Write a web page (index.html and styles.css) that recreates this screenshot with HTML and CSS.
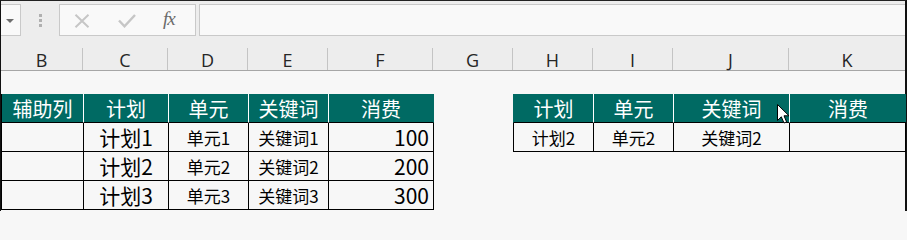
FILE: index.html
```html
<!DOCTYPE html>
<html lang="zh-CN">
<head>
<meta charset="utf-8">
<title>Sheet</title>
<link rel="stylesheet" href="styles.css">
</head>
<body>
<div class="frame">
  <div class="toolbar">
    <div class="namebox"><span class="tri"></span></div>
    <div class="grip"><i></i><i></i><i></i></div>
    <div class="fxbox">
      <svg class="ico-x" width="16" height="14" viewBox="0 0 16 14"><path d="M1.5 0.8 L14.5 13.2 M14.5 0.8 L1.5 13.2" stroke="#c6c6c6" stroke-width="2" fill="none"/></svg>
      <svg class="ico-ok" width="18" height="14" viewBox="0 0 18 14"><path d="M1 6.5 L6.5 12.3 L17 1" stroke="#c6c6c6" stroke-width="2.4" fill="none"/></svg>
      <span class="fx">fx</span>
    </div>
    <div class="formula"></div>
  </div>
  <div class="colheads">
    <div class="ch w82">B</div>
    <div class="ch w85">C</div>
    <div class="ch w80">D</div>
    <div class="ch w80">E</div>
    <div class="ch w105">F</div>
    <div class="ch w80">G</div>
    <div class="ch w80">H</div>
    <div class="ch w80">I</div>
    <div class="ch w116">J</div>
    <div class="ch w116 last">K</div>
  </div>
  <div class="sheet">
    <div class="tbl tbl-left">
      <div class="th">辅助列</div>
      <div class="th">计划</div>
      <div class="th">单元</div>
      <div class="th">关键词</div>
      <div class="th end">消费</div>

      <div class="td"></div>
      <div class="td big">计划1</div>
      <div class="td">单元1</div>
      <div class="td">关键词1</div>
      <div class="td num">100</div>

      <div class="td"></div>
      <div class="td big">计划2</div>
      <div class="td">单元2</div>
      <div class="td">关键词2</div>
      <div class="td num">200</div>

      <div class="td"></div>
      <div class="td big">计划3</div>
      <div class="td">单元3</div>
      <div class="td">关键词3</div>
      <div class="td num">300</div>
    </div>
    <div class="tbl tbl-right">
      <div class="th first">计划</div>
      <div class="th">单元</div>
      <div class="th">关键词</div>
      <div class="th end">消费</div>

      <div class="td first">计划2</div>
      <div class="td">单元2</div>
      <div class="td">关键词2</div>
      <div class="td"></div>
    </div>
  </div>
  <svg class="cursor" width="13" height="20" viewBox="0 0 13 20"><path d="M0.5 0.5 L0.5 16.5 L4.3 12.8 L7 19 L9.6 17.9 L7 11.8 L12 11.8 Z" fill="#fff" stroke="#000" stroke-width="1" stroke-linejoin="miter"/></svg>
</div>
</body>
</html>
```
FILE: styles.css
```css
html, body {
  margin: 0;
  padding: 0;
}
html {
  height: 211px;
  overflow: hidden;
  background: #f7f7f7;
}
body {
  width: 907px;
  height: 211px;
  overflow: hidden;
  background: #f7f7f7;
}
.frame {
  position: relative;
  box-sizing: border-box;
  width: 907px;
  height: 211px;
  border-top: 1px solid #222;
  border-left: 1px solid #111;
  border-right: 2px solid #111;
  background: #f7f7f7;
}
.toolbar {
  display: flex;
  align-items: flex-start;
  height: 47px;
  box-sizing: border-box;
  padding-top: 3px;
  background: #ededed;
}
.namebox {
  box-sizing: border-box;
  width: 20px;
  height: 32px;
  border: 1px solid #c9c9c9;
  border-left: none;
  background: #f9f9f9;
  display: flex;
  align-items: center;
  justify-content: center;
}
.tri {
  width: 0;
  height: 0;
  border-left: 4px solid transparent;
  border-right: 4px solid transparent;
  border-top: 4px solid #6d6d6d;
  margin-top: 2px;
  margin-left: -2px;
}
.grip {
  margin-left: 18px;
  margin-top: 10px;
  display: flex;
  flex-direction: column;
  gap: 2px;
}
.grip i {
  display: block;
  width: 3px;
  height: 3px;
  background: #b0b0b0;
}
.fxbox {
  box-sizing: border-box;
  margin-left: 17px;
  width: 137px;
  height: 32px;
  border: 1px solid #c9c9c9;
  background: #f9f9f9;
  display: flex;
  align-items: center;
}
.ico-x {
  margin-left: 14px;
  margin-top: 1px;
}
.ico-ok {
  margin-left: 28px;
  margin-top: 1px;
}
.fx {
  margin-left: 27px;
  font-family: "Liberation Serif", serif;
  font-style: italic;
  font-size: 19px;
  color: #6a6a6a;
  letter-spacing: -1px;
  margin-top: -2px;
}
.formula {
  box-sizing: border-box;
  margin-left: 3px;
  flex: 1;
  height: 32px;
  border: 1px solid #c9c9c9;
  border-right: none;
  background: #f9f9f9;
}
.colheads {
  display: flex;
  height: 23px;
  box-sizing: border-box;
  border-bottom: 1px solid #a6a6a6;
  background: #ededed;
}
.ch {
  box-sizing: border-box;
  height: 22px;
  border-right: 1px solid #c4c4c4;
  display: flex;
  align-items: center;
  justify-content: center;
  font-family: "Open Sans", sans-serif;
  font-size: 18px;
  color: #262626;
  padding-top: 1px;
}
.ch.last {
  border-right: none;
}
.w80 { width: 80px; }
.w82 { width: 82px; }
.w85 { width: 85px; }
.w105 { width: 105px; }
.w116 { width: 116px; }

.sheet {
  display: flex;
  align-items: flex-start;
  padding-top: 23px;
}
.tbl {
  display: grid;
  grid-auto-rows: 29px;
  font-family: "Noto Sans CJK SC", sans-serif;
}
.tbl-left {
  grid-template-columns: 82px 85px 80px 80px 105px;
  border-left: 1px solid #000;
}
.tbl-right {
  margin-left: 79px;
  grid-template-columns: 81px 80px 116px 116px;
}
.th, .td {
  box-sizing: border-box;
  display: flex;
  align-items: center;
  justify-content: center;
  white-space: nowrap;
}
.th {
  background: #006a63;
  color: #fff;
  font-size: 20px;
  border-right: 1px solid #fff;
  border-bottom: 1px solid #000;
}
.th.end {
  border-right: none;
}
.tbl-left .th.end {
  border-right: 1px solid #006a63;
}
.tbl-right .th.first {
  border-left: 1px solid #006a63;
}
.td {
  color: #000;
  font-size: 17px;
  border-right: 1px solid #000;
  border-bottom: 1px solid #000;
}
.td.first {
  border-left: 1px solid #000;
}
.td.big {
  font-size: 21px;
}
.td.num {
  justify-content: flex-end;
  padding-right: 4px;
  font-size: 21px;
}
.cursor {
  position: absolute;
  left: 776px;
  top: 103px;
}
```
